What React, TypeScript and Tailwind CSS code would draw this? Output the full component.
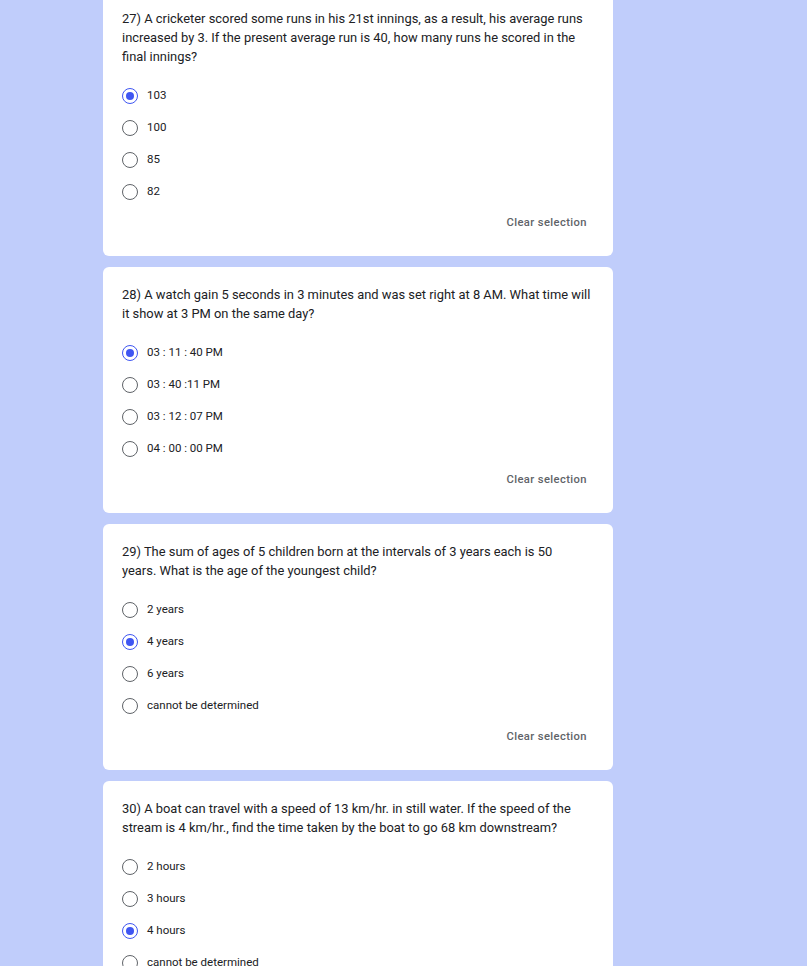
import React from "react";

type Question = {
  text: React.ReactNode;
  options: string[];
  selected: number;
};

const questions: Question[] = [
  {
    text: "27) A cricketer scored some runs in his 21st innings, as a result, his average runs increased by 3. If the present average run is 40, how many runs he scored in the final innings?",
    options: ["103", "100", "85", "82"],
    selected: 0,
  },
  {
    text: "28) A watch gain 5 seconds in 3 minutes and was set right at 8 AM. What time will it show at 3 PM on the same day?",
    options: ["03 : 11 : 40 PM", "03 : 40 :11 PM", "03 : 12 : 07 PM", "04 : 00 : 00 PM"],
    selected: 0,
  },
  {
    text: (
      <>
        29) The sum of ages of 5 children born at the intervals of 3 years each is 50
        <br />
        years. What is the age of the youngest child?
      </>
    ),
    options: ["2 years", "4 years", "6 years", "cannot be determined"],
    selected: 1,
  },
  {
    text: "30) A boat can travel with a speed of 13 km/hr. in still water. If the speed of the stream is 4 km/hr., find the time taken by the boat to go 68 km downstream?",
    options: ["2 hours", "3 hours", "4 hours", "cannot be determined"],
    selected: 2,
  },
];

const Radio = ({ checked }: { checked: boolean }) => (
  <div
    className={
      checked
        ? "w-4 h-4 rounded-full border-[1.6px] border-[#3f56f2] flex items-center justify-center shrink-0"
        : "w-4 h-4 rounded-full border-[1.6px] border-[#5f6368] shrink-0"
    }
  >
    {checked && <div className="w-2 h-2 rounded-full bg-[#3f56f2]" />}
  </div>
);

const QuestionCard = ({ q }: { q: Question }) => (
  <div className="bg-white rounded-[6px] pt-[17.5px] pb-[18px] pl-[19px] pr-[19px]">
    <div
      className="text-[12.9px] leading-[19px] text-[#202124]"
      style={{ fontFamily: "Roboto, 'Noto Sans', sans-serif" }}
    >
      {q.text}
    </div>
    <div className="mt-[14.5px] flex flex-col">
      {q.options.map((opt, i) => (
        <div key={opt} className="h-8 flex items-center gap-[9px]">
          <Radio checked={i === q.selected} />
          <span
            className="text-[11.5px] text-[#202124]"
            style={{ fontFamily: "Roboto, sans-serif" }}
          >
            {opt}
          </span>
        </div>
      ))}
    </div>
    <div className="h-[30px] flex items-center justify-end pr-[7px]">
      <span
        className="text-[11.2px] font-medium text-[#5f6368] tracking-[0.4px]"
        style={{ fontFamily: "Roboto, sans-serif" }}
      >
        Clear selection
      </span>
    </div>
  </div>
);

export default function App() {
  return (
    <div className="bg-[#c0cdfb] overflow-hidden h-[966px]">
      <div className="ml-[103px] w-[510px] -mt-[9px] flex flex-col gap-[11px]">
        {questions.map((q, i) => (
          <QuestionCard key={i} q={q} />
        ))}
      </div>
    </div>
  );
}
